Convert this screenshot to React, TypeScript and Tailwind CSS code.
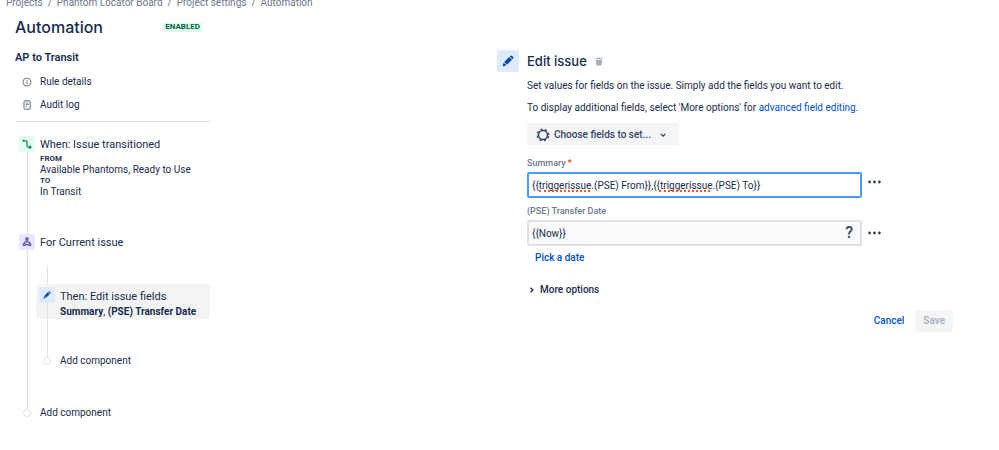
import React, { useState } from "react";

function Pencil({ size }: { size: number }) {
  return (
    <svg width={size} height={size} viewBox="0 0 16 16" fill="#0747a6" aria-hidden="true">
      <path d="M9.6 2.7 13.3 6.4 6.6 13 3 9.4Z" />
      <path d="M10.4 1.9 11.2 1.2Q12.5 .2 13.7 1.4L14.6 2.3Q15.8 3.5 14.8 4.8L14.1 5.6Z" />
      <path d="M2.3 10.2 5.8 13.7 2.4 15Q.7 15.4 1.1 13.7Z" />
    </svg>
  );
}

function Dots() {
  return (
    <svg width="13" height="4" viewBox="0 0 13 4" fill="#344563" aria-hidden="true">
      <circle cx="1.6" cy="2" r="1.4" />
      <circle cx="6.5" cy="2" r="1.4" />
      <circle cx="11.4" cy="2" r="1.4" />
    </svg>
  );
}

function Gear() {
  return (
    <svg width="14" height="14" viewBox="0 0 14 14" fill="none" stroke="#344563" aria-hidden="true">
      <circle cx="7" cy="7" r="4.5" strokeWidth="1.5" />
      <circle cx="7" cy="7" r="5.7" strokeWidth="1.4" strokeDasharray="2.1 2.377" strokeDashoffset="-1.2" />
    </svg>
  );
}

function Circle() {
  return <span className="size-2 shrink-0 rounded-full border border-[#dfe1e6] bg-white" />;
}

const crumbs = ["Projects", "Phantom Locator Board", "Project settings", "Automation"];

function Sidebar() {
  return (
    <aside>
      <div className="flex items-center justify-between pr-[7px]">
        <h1 className="font-['Inter',sans-serif] text-[16px] leading-5 font-medium">Automation</h1>
        <span className="rounded-xs bg-[#e3fcef] px-[3px] text-[8px] leading-[10px] font-bold text-[#006644]">
          ENABLED
        </span>
      </div>
      <h2 className="mt-[13px] text-[11px] leading-4 font-semibold">AP to Transit</h2>
      <nav className="mt-2 flex flex-col gap-[7px] border-b border-[#dfe1e6] pb-[8px] text-[10px] leading-4">
        <a href="#details" className="flex items-center gap-2 pl-[7px]">
          <svg width="10" height="10" viewBox="0 0 10 10" fill="none" stroke="#5e6c84" aria-hidden="true">
            <circle cx="5" cy="5" r="4" strokeWidth=".9" />
            <path d="M5 4.5V7M5 2.8V3.7" />
          </svg>
          Rule details
        </a>
        <a href="#audit" className="flex items-center gap-2 pl-[7px]">
          <svg width="10" height="10" viewBox="0 0 10 10" fill="none" stroke="#5e6c84" aria-hidden="true">
            <rect x="2" y=".8" width="6.2" height="8.4" rx=".8" />
            <path d="M3.6 3H6.7M3.6 4.6H6.7M3.6 6.2H5" strokeWidth=".8" />
          </svg>
          Audit log
        </a>
      </nav>

      <div className="mt-[14px] ml-1 flex gap-px">
        <div className="flex w-4 shrink-0 flex-col items-center">
          <span className="flex size-4 items-center justify-center rounded-xs bg-[#e3fcef]">
            <svg width="10" height="10" viewBox="0 0 10 10" fill="none" stroke="#00875a" strokeWidth="1.2" aria-hidden="true">
              <path d="M1.5 1.8H3.8Q5 1.8 5 3V7Q5 8.2 6.2 8.2H8.8M7.4 6.7 9 8.2 7.4 9.6" />
              <circle cx="1.4" cy="1.8" r="1" fill="#00875a" stroke="none" />
            </svg>
          </span>
          <span className="w-px flex-1 bg-[#dfe1e6]" />
        </div>
        <div className="pt-px pb-[37px] pl-1 text-[10px]">
          <h3 className="text-[11px] leading-4">When: Issue transitioned</h3>
          <dl className="leading-[11px]">
            <dt className="text-[8px] font-semibold">FROM</dt>
            <dd>Available Phantoms, Ready to Use</dd>
            <dt className="text-[8px] font-semibold">TO</dt>
            <dd>In Transit</dd>
          </dl>
        </div>
      </div>

      <div className="ml-1 flex gap-px">
        <div className="flex w-4 shrink-0 flex-col items-center">
          <span className="flex size-4 items-center justify-center rounded-xs bg-[#eae6ff]">
            <svg width="10" height="10" viewBox="0 0 10 10" fill="none" stroke="#5243aa" strokeWidth="1.1" aria-hidden="true">
              <rect x="4" y="1" width="2" height="2" />
              <circle cx="2.2" cy="7.6" r="1.1" />
              <circle cx="7.8" cy="7.6" r="1.1" />
              <path d="M5 3.2V5M2.2 6.5V5.8Q2.2 5 3 5H7Q7.8 5 7.8 5.8V6.5M3.7 7.6H6.3" />
            </svg>
          </span>
          <span className="w-px flex-1 bg-[#dfe1e6]" />
        </div>
        <div className="flex-1 pt-px pb-10">
          <h3 className="pl-1 text-[11px] leading-4">For Current issue</h3>
          <div className="mt-[10px] ml-[11px] h-[23px] w-px bg-linear-to-b from-white to-[#dfe1e6] to-40%" />
          <div className="flex gap-[5px] rounded-xs bg-[#f4f4f5] pl-[3px]">
            <div className="flex w-4 shrink-0 flex-col items-center pt-[3px]">
              <span className="flex size-4 items-center justify-center rounded-xs bg-[#deebff]">
                <Pencil size={8} />
              </span>
              <span className="w-px flex-1 bg-[#dfe1e6]" />
            </div>
            <div className="pt-[5px] pb-px">
              <h4 className="text-[11px] leading-4">Then: Edit issue fields</h4>
              <p className="text-[10px] leading-[13px] whitespace-nowrap">
                <b>Summary</b>, <b>(PSE) Transfer Date</b>
              </p>
            </div>
          </div>
          <div className="ml-[11px] h-[38px] w-px bg-[#dfe1e6]" />
          <button type="button" className="-mt-1 flex items-center gap-[9px] pl-[7px] text-[10px] leading-4">
            <Circle />
            Add component
          </button>
        </div>
      </div>
      <button type="button" className="-mt-1 flex items-center gap-[9px] pl-2 text-[10px] leading-4">
        <Circle />
        Add component
      </button>
    </aside>
  );
}

function EditIssue() {
  const [summary, setSummary] = useState("{{triggerissue.(PSE) From}},{{triggerissue.(PSE) To}}");
  const [date, setDate] = useState("{{Now}}");
  return (
    <main className="pt-[33px] text-[10px] leading-4">
      <div className="flex items-center gap-2">
        <span className="flex size-[22px] items-center justify-center rounded-xs bg-[#deebff]">
          <Pencil size={12} />
        </span>
        <h2 className="font-['Inter',sans-serif] text-[13px] leading-5 font-medium">Edit issue</h2>
        <button type="button" aria-label="Delete component">
          <svg width="8" height="9" viewBox="0 0 8 9" fill="#a5adba" aria-hidden="true">
            <path d="M0 1.2H2.6L3 .4H5L5.4 1.2H8V2.3H0ZM.8 3H7.2L6.7 7.8Q6.6 8.6 5.8 8.6H2.2Q1.4 8.6 1.3 7.8Z" />
          </svg>
        </button>
      </div>
      <form className="pl-[30px]" onSubmit={(e) => e.preventDefault()}>
        <p className="mt-[6px]">Set values for fields on the issue. Simply add the fields you want to edit.</p>
        <p className="mt-[6px]">
          To display additional fields, select 'More options' for{" "}
          <a href="#advanced" className="text-[#0052cc]">advanced field editing</a>.
        </p>
        <button
          type="button"
          className="mt-[7px] flex h-[22px] items-center gap-1 rounded-xs bg-[#f4f5f7] pt-px pr-3 pl-[9px] font-medium text-[#344563]"
        >
          <Gear />
          Choose fields to set...
          <svg className="ml-1" width="8" height="8" viewBox="0 0 8 8" fill="none" stroke="#344563" strokeWidth="1.3" aria-hidden="true">
            <path d="M1.8 3 4 5.2 6.2 3" />
          </svg>
        </button>

        <label htmlFor="summary" className="mt-3 block text-[9px] leading-3 font-medium text-[#6b778c]">
          Summary<span className="ml-[2px] text-[#de350b]">*</span>
        </label>
        <div className="mt-[3px] flex items-center gap-[6px]">
          <div className="relative mr-auto w-full max-w-[335px]">
            <input
              id="summary"
              spellCheck={false}
              value={summary}
              onChange={(e) => setSummary(e.target.value)}
              className="block h-[26px] w-full rounded-xs border-2 border-[#4c9aff] bg-white pt-px pr-1 pl-[3px] outline-none"
            />
            <span className="absolute top-[18px] left-3 w-[51px] border-b-2 border-dotted border-[#ff5630]" />
            <span className="absolute top-[18px] left-[132px] w-[51px] border-b-2 border-dotted border-[#ff5630]" />
          </div>
          <button type="button" aria-label="Summary options" className="mr-[72px] pb-[6px]">
            <Dots />
          </button>
        </div>

        <label htmlFor="date" className="mt-[7px] block text-[9px] leading-3 font-medium text-[#6b778c]">
          (PSE) Transfer Date
        </label>
        <div className="mt-[3px] flex items-center gap-[6px]">
          <div className="relative mr-auto w-full max-w-[335px]">
            <input
              id="date"
              value={date}
              onChange={(e) => setDate(e.target.value)}
              className="block h-[26px] w-full rounded-xs border-2 border-[#dfe1e6] bg-[#fafbfc] pt-px pr-6 pl-[3px] outline-none"
            />
            <button type="button" className="absolute inset-y-0 right-[9px] text-[16px] font-semibold text-[#42526e]">
              ?
            </button>
          </div>
          <button type="button" aria-label="Transfer date options" className="mr-[72px]">
            <Dots />
          </button>
        </div>
        <button type="button" className="mt-1 block pl-2 font-medium text-[#0052cc]">Pick a date</button>

        <button type="button" className="mt-4 flex items-center gap-1 font-medium">
          <svg width="9" height="8" viewBox="0 0 9 8" fill="none" stroke="#172b4d" strokeWidth="1.3" aria-hidden="true">
            <path d="M3.6 1.8 5.8 4 3.6 6.2" />
          </svg>
          More options
        </button>

        <div className="mt-3 flex items-center justify-end gap-[11px] font-medium">
          <button type="button" className="text-[#0052cc]">Cancel</button>
          <button type="submit" disabled className="h-[22px] rounded-xs bg-[#f4f5f7] px-2 text-[#a5adba]">
            Save
          </button>
        </div>
      </form>
    </main>
  );
}

export default function App() {
  return (
    <div className="min-h-screen bg-white font-['Roboto',sans-serif] text-[#172b4d]">
      <nav aria-label="Breadcrumb" className="flex h-[11px] items-end overflow-hidden pl-[6px] text-[10px] leading-4 text-[#6b778c]">
        {crumbs.map((c, i) => (
          <React.Fragment key={c}>
            {i > 0 && <span className="px-[5px]">/</span>}
            <a href="#crumb">{c}</a>
          </React.Fragment>
        ))}
      </nav>
      <div className="grid grid-cols-[195px_minmax(0,456px)] justify-between pt-[6px] pr-[46px] pl-[15px]">
        <Sidebar />
        <EditIssue />
      </div>
    </div>
  );
}
